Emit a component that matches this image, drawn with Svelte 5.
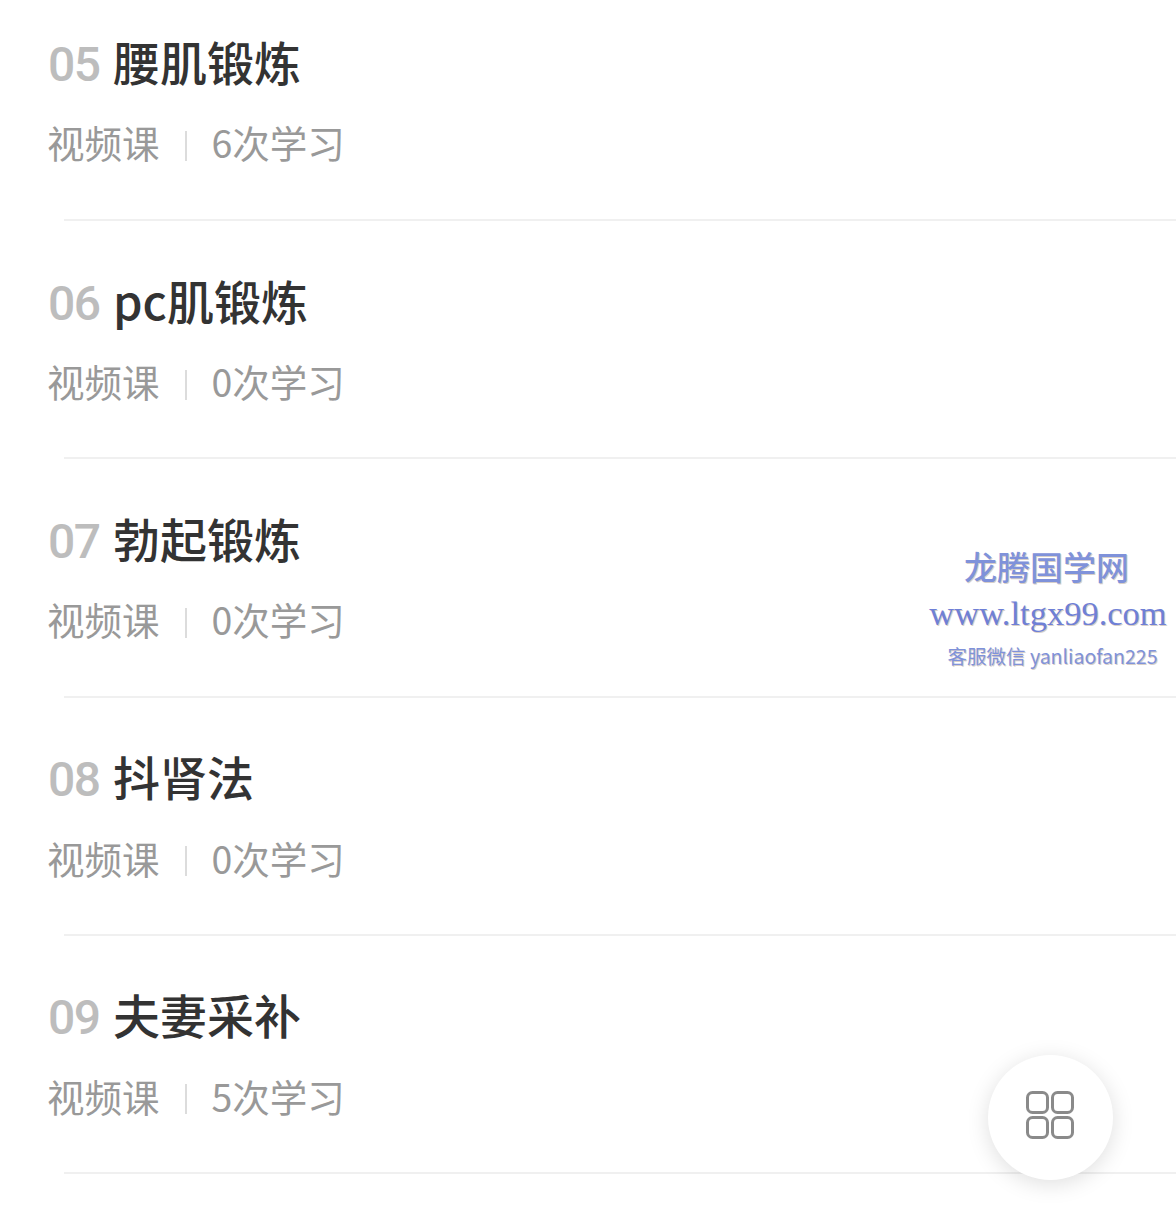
<script>
	const lessons = [
		{ no: '05', title: '腰肌锻炼', count: 6 },
		{ no: '06', title: 'pc肌锻炼', count: 0 },
		{ no: '07', title: '勃起锻炼', count: 0 },
		{ no: '08', title: '抖肾法', count: 0 },
		{ no: '09', title: '夫妻采补', count: 5 }
	];
</script>

<div class="page">
	<ul class="list">
		{#each lessons as lesson}
			<li class="row">
				<div class="title">
					<span class="no">{lesson.no}</span>
					<span class="name">{lesson.title}</span>
				</div>
				<div class="meta">
					<span>视频课</span>
					<i class="sep"></i>
					<span>{lesson.count}次学习</span>
				</div>
			</li>
		{/each}
	</ul>

	<!-- watermark over the list -->
	<div class="mark">
		<div class="mark-name">龙腾国学网</div>
		<div class="mark-url">www.ltgx99.com</div>
		<div class="mark-contact">客服微信 yanliaofan225</div>
	</div>

	<button class="fab" aria-label="目录">
		<svg width="48" height="48" viewBox="0 0 48 48" fill="none" stroke="#8a8a8a" stroke-width="3">
			<rect x="1.5" y="1.5" width="20" height="20" rx="5" />
			<rect x="26.5" y="1.5" width="20" height="20" rx="5" />
			<rect x="1.5" y="26.5" width="20" height="20" rx="5" />
			<rect x="26.5" y="26.5" width="20" height="20" rx="5" />
		</svg>
	</button>
</div>

<style>
	:global(body) {
		background: #fff;
	}

	.page {
		position: relative;
		width: 1176px;
		height: 1227px;
		overflow: hidden;
		background: #fff;
		font-family: 'Noto Sans CJK SC', Roboto, sans-serif;
	}

	.list {
		list-style: none;
		margin: 0;
		padding: 0;
	}

	.row {
		box-sizing: border-box;
		height: 238.3px;
		padding: 48px 0 0 48px;
		position: relative;
	}

	.row:first-child {
		height: 221px;
		padding-top: 30px;
	}

	/* hairline starts a little right of the text */
	.row::after {
		content: '';
		position: absolute;
		left: 64px;
		right: 0;
		bottom: 0;
		height: 2px;
		background: #f0f0f0;
	}

	.title {
		display: flex;
		align-items: center;
		gap: 13px;
		height: 68px;
	}

	.no {
		font-family: Roboto, sans-serif;
		font-size: 48px;
		font-weight: 500;
		letter-spacing: -1.5px;
		color: #bdbdbd;
		width: 52px;
	}

	.name {
		font-size: 47px;
		font-weight: 500;
		color: #333;
		margin-top: -8px;
	}

	.meta {
		display: flex;
		align-items: center;
		margin-top: 9.5px;
		height: 68px;
		font-size: 37.5px;
		color: #999;
		margin-left: -1px;
	}

	.sep {
		width: 2px;
		height: 30px;
		margin: 8px 25px 0;
		background: #dcdcdc;
	}

	.mark {
		position: absolute;
		left: 920px;
		top: 543px;
		width: 256px;
		text-align: center;
		color: #7f92da;
		text-shadow: 1px 1px 0 #d8cfc8;
	}

	.mark-name {
		font-size: 33px;
		font-weight: 500;
		line-height: 46px;
		margin-left: -3px;
	}

	.mark-url {
		font-family: 'Liberation Serif', serif;
		font-size: 34.5px;
		line-height: 48px;
		color: #6f80d6;
		white-space: nowrap;
	}

	.mark-contact {
		font-size: 19.5px;
		line-height: 38px;
		margin-left: 9px;
		white-space: nowrap;
	}

	.fab {
		position: absolute;
		left: 988px;
		top: 1055px;
		width: 125px;
		height: 125px;
		padding: 0 2px 6px 0;
		border: none;
		border-radius: 50%;
		background: #fff;
		box-shadow: 0 4px 22px rgba(0, 0, 0, 0.13);
		display: flex;
		align-items: center;
		justify-content: center;
	}
</style>
